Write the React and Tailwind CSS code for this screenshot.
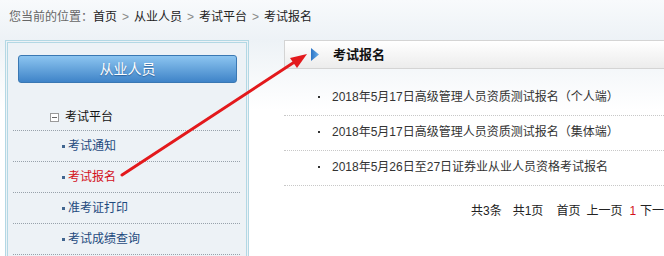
import React from "react";

const subItems = [
  { label: "考试通知", active: false },
  { label: "考试报名", active: true },
  { label: "准考证打印", active: false },
  { label: "考试成绩查询", active: false },
];

const listItems = [
  "2018年5月17日高级管理人员资质测试报名（个人端）",
  "2018年5月17日高级管理人员资质测试报名（集体端）",
  "2018年5月26日至27日证券业从业人员资格考试报名",
];

export default function App() {
  return (
    <div className="relative w-[664px] h-[256px] overflow-hidden bg-[linear-gradient(to_bottom,#f8fafc_0px,#edf2f6_40px,#ffffff_110px)] font-['Liberation_Sans','Noto_Sans_CJK_SC',sans-serif]">
      {/* breadcrumb */}
      <div className="h-[34px] pl-[9px] flex items-center text-[12px] leading-[18px] text-[#222] whitespace-nowrap">
        <span className="text-[#666]">您当前的位置：</span>
        <span>首页</span>
        <span className="mx-[5px] text-[#888]">&gt;</span>
        <span>从业人员</span>
        <span className="mx-[5px] text-[#888]">&gt;</span>
        <span>考试平台</span>
        <span className="mx-[5px] text-[#888]">&gt;</span>
        <span>考试报名</span>
      </div>

      <div className="flex items-start mt-[6px]">
        {/* left menu */}
        <aside className="ml-[5px] w-[244px] h-[260px] shrink-0 border-[3px] border-double border-[#b3d8e4] bg-[#edf2f6] pt-[12px]">
          <div className="ml-[10px] w-[219px] h-[28px] rounded-[3px] border border-[#3a78b3] bg-[linear-gradient(to_bottom,#8cc5f0,#3f84c8)] flex items-center justify-center text-white text-[14px] [text-shadow:0_1px_1px_rgba(0,40,90,0.45)]">
            从业人员
          </div>
          <div className="ml-[5px] mr-[6px]">
            <div className="h-[48px] pt-[25px] border-b border-dotted border-[#98a2ab]">
              <div className="flex items-center h-[18px] pl-[37px] text-[12px] text-[#111]">
                <span className="w-[9px] h-[9px] border border-[#9a9a9a] bg-white flex items-center justify-center mr-[6px]">
                  <span className="w-[5px] h-px bg-[#666]" />
                </span>
                <span>考试平台</span>
              </div>
            </div>
            {subItems.map((it) => (
              <div
                key={it.label}
                className="h-[31px] border-b border-dotted border-[#98a2ab] flex items-center pl-[49px] text-[12px]"
              >
                <span className="w-[3px] h-[3px] bg-[#40658f] mr-[3px]" />
                <span className={it.active ? "text-[#d3101b]" : "text-[#1e4a7e]"}>{it.label}</span>
              </div>
            ))}
          </div>
        </aside>

        {/* right content */}
        <main className="ml-[35px] w-[420px] shrink-0">
          <div className="h-[29px] border border-[#d4d4d4] bg-[linear-gradient(to_bottom,#ffffff,#ececec)] flex items-center pl-[26px]">
            <svg width="8" height="13" viewBox="0 0 8 13" className="shrink-0">
              <defs>
                <linearGradient id="tri" x1="0" y1="0" x2="1" y2="0">
                  <stop offset="0" stopColor="#2b74c6" />
                  <stop offset="1" stopColor="#6aaee8" />
                </linearGradient>
              </defs>
              <path d="M0 0 L8 6.5 L0 13 Z" fill="url(#tri)" />
            </svg>
            <span className="ml-[14px] text-[13px] font-bold text-[#111]">考试报名</span>
          </div>
          <div className="pt-[12px]">
            {listItems.map((t) => (
              <div
                key={t}
                className="h-[35px] border-b border-dotted border-[#c8c8c8] flex items-center pb-[3px] pl-[34px] text-[12px] text-[#333] whitespace-nowrap"
              >
                <span className="w-[2px] h-[2px] bg-[#333] mr-[12px]" />
                <span>{t}</span>
              </div>
            ))}
          </div>
          <div className="mt-[16px] h-[18px] flex items-center pl-[187px] text-[12px] text-[#222] whitespace-nowrap">
            <span>共3条</span>
            <span className="ml-[11px]">共1页</span>
            <span className="ml-[13px]">首页</span>
            <span className="ml-[6px]">上一页</span>
            <span className="ml-[7px] text-[#d3101b]">1</span>
            <span className="ml-[4px]">下一页</span>
          </div>
        </main>
      </div>

      {/* red annotation arrow */}
      <svg className="absolute inset-0 pointer-events-none" width="664" height="256" viewBox="0 0 664 256">
        <line x1="122" y1="175" x2="296" y2="61" stroke="#e3191c" strokeWidth="3" strokeLinecap="round" />
        <path d="M307 54 L297 68 L290 58 Z" fill="#e3191c" />
      </svg>
    </div>
  );
}
